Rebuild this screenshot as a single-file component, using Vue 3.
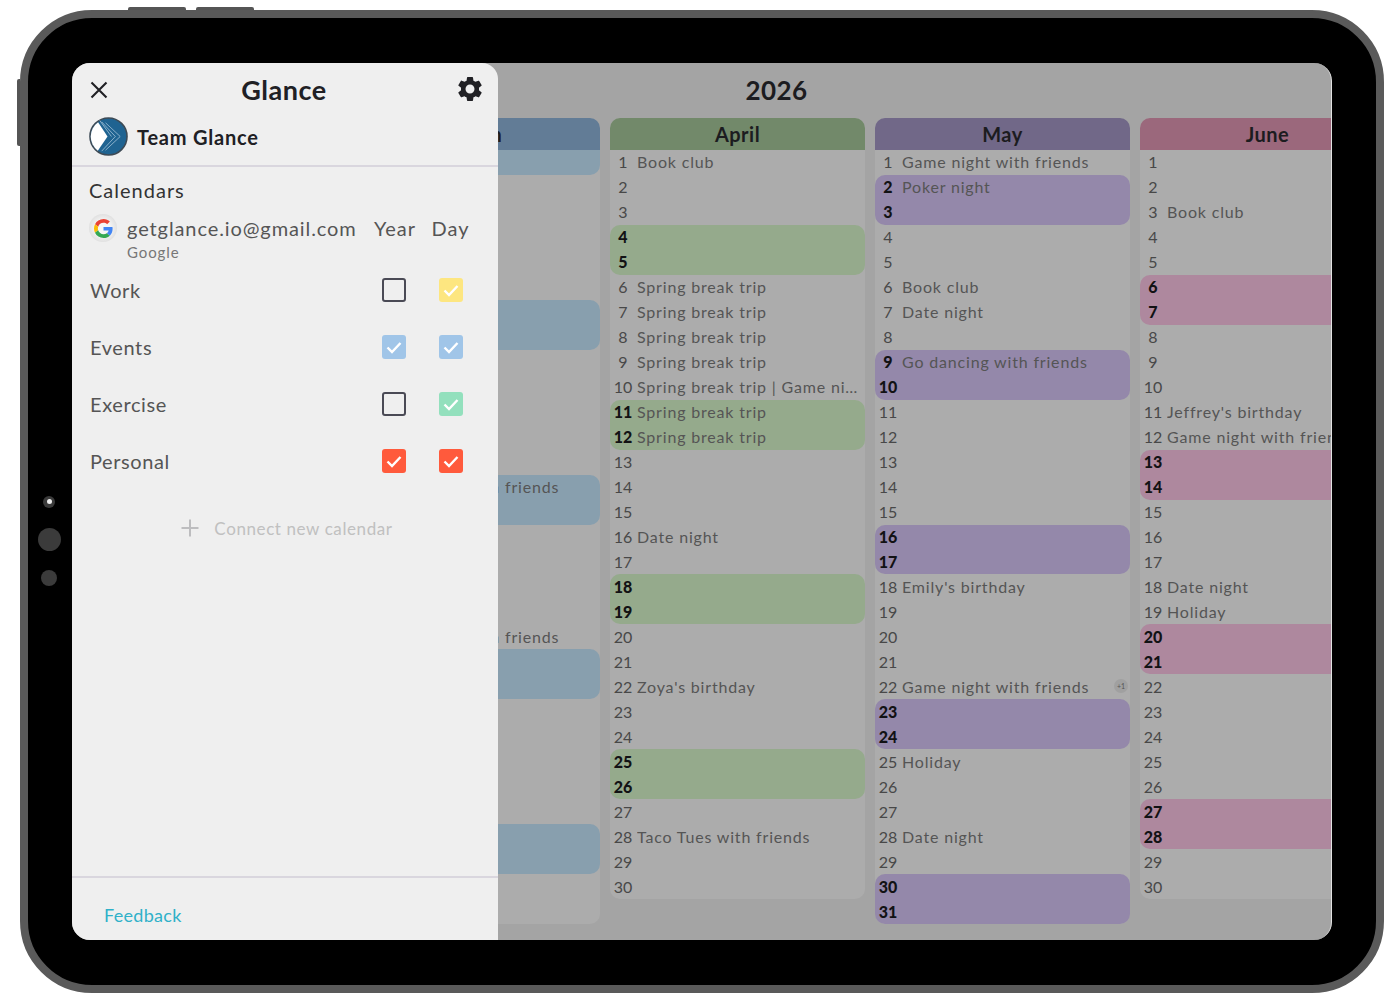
<template>
  <div class="page">
    <div class="device">
      <span class="btn btn-top-a"></span>
      <span class="btn btn-top-b"></span>
      <span class="btn btn-side"></span>
      <span class="lens"><i></i></span>
      <span class="dot dot-big"></span>
      <span class="dot dot-small"></span>

      <div class="screen">
        <div class="year">2026</div>
        <div class="months">
          <section v-for="month in months" :key="month.name" class="month" :class="month.key">
            <h3 class="month-name">{{ month.name }}</h3>
            <div
              v-for="day in month.days"
              :key="day.num"
              class="day"
              :class="{ weekend: day.weekend, sat: day.sat, sun: day.sun }"
            >
              <span class="num">{{ day.num }}</span>
              <span class="text">{{ day.text }}</span>
              <span v-if="day.more" class="more">+{{ day.more }}</span>
            </div>
          </section>
        </div>

        <aside class="panel">
          <header class="panel-head">
            <svg class="close" viewBox="0 0 18 18" width="18" height="18">
              <path d="M1.5 1.5 16.5 16.5M16.5 1.5 1.5 16.5" fill="none" stroke="#202024" stroke-width="2.1" />
            </svg>
            <h1>Glance</h1>
            <svg class="gear" viewBox="0 0 24 24" width="30" height="30">
              <path fill="#202024" d="M19.14 12.94c.04-.3.06-.61.06-.94 0-.32-.02-.64-.07-.94l2.03-1.58c.18-.14.23-.41.12-.61l-1.92-3.32c-.12-.22-.37-.29-.59-.22l-2.39.96c-.5-.38-1.03-.7-1.62-.94l-.36-2.54c-.04-.24-.24-.41-.48-.41h-3.84c-.24 0-.43.17-.47.41l-.36 2.54c-.59.24-1.13.57-1.62.94l-2.39-.96c-.22-.08-.47 0-.59.22L2.74 8.87c-.12.21-.08.47.12.61l2.03 1.58c-.05.3-.09.63-.09.94s.02.64.07.94l-2.03 1.58c-.18.14-.23.41-.12.61l1.92 3.32c.12.22.37.29.59.22l2.39-.96c.5.38 1.03.7 1.62.94l.36 2.54c.05.24.24.41.48.41h3.84c.24 0 .44-.17.47-.41l.36-2.54c.59-.24 1.13-.56 1.62-.94l2.39.96c.22.08.47 0 .59-.22l1.92-3.32c.12-.22.07-.47-.12-.61l-2.01-1.58zM12 15.6c-1.98 0-3.6-1.62-3.6-3.6s1.62-3.6 3.6-3.6 3.6 1.62 3.6 3.6-1.62 3.6-3.6 3.6z" />
            </svg>
          </header>

          <div class="user">
            <svg viewBox="0 0 40 40" width="39" height="39">
              <circle cx="20" cy="20" r="19" fill="#1f6391" stroke="#3d4a55" stroke-width="1.6" />
              <path d="M9.300 5.400 19 20 9 34.500A18 18 0 0 1 9.300 5.400z" fill="#fff" />
              <path d="M13 5 27 20 13 35M17 6 32 20 17 34M11 3.500 23 20" fill="none" stroke="#b9d3e4" stroke-width=".7" />
            </svg>
            <span>Team Glance</span>
          </div>

          <div class="body">
            <h2>Calendars</h2>
            <div class="account">
              <span class="g-badge">
                <svg viewBox="0 0 48 48" width="19" height="19">
                  <path fill="#ea4335" d="M24 9.5c3.5 0 6.700 1.200 9.200 3.600l6.900-6.900C35.900 2.400 30.500 0 24 0 14.600 0 6.500 5.400 2.600 13.200l8 6.200C12.500 13.700 17.800 9.500 24 9.500z" />
                  <path fill="#4285f4" d="M46.980 24.550c0-1.570-.15-3.090-.38-4.550H24v9.020h12.940c-.58 2.960-2.260 5.480-4.780 7.180l7.730 6c4.510-4.180 7.090-10.360 7.090-17.650z" />
                  <path fill="#fbbc05" d="M10.530 28.590c-.48-1.450-.76-2.990-.76-4.590s.27-3.140.76-4.590l-7.980-6.190C.92 16.460 0 20.120 0 24c0 3.880.92 7.540 2.560 10.780l7.970-6.190z" />
                  <path fill="#34a853" d="M24 48c6.480 0 11.930-2.130 15.890-5.810l-7.730-6c-2.150 1.450-4.920 2.300-8.160 2.300-6.260 0-11.570-4.220-13.470-9.910l-7.980 6.190C6.510 42.620 14.620 48 24 48z" />
                </svg>
              </span>
              <div class="account-name">
                <div class="email">getglance.io@gmail.com</div>
                <div class="provider">Google</div>
              </div>
              <span class="col-label year-label">Year</span>
              <span class="col-label day-label">Day</span>
            </div>

            <div v-for="cal in calendars" :key="cal.name" class="cal-row">
              <span class="cal-name">{{ cal.name }}</span>
              <span class="check" :class="{ on: cal.year }" :style="cal.year ? { background: cal.color } : null">
                <svg v-if="cal.year" viewBox="0 0 24 24" width="24" height="24">
                  <path d="M5.500 12.500 10 17 18.500 8" fill="none" stroke="#fff" stroke-width="2.400" />
                </svg>
              </span>
              <span class="check on" :style="{ background: cal.color }">
                <svg viewBox="0 0 24 24" width="24" height="24">
                  <path d="M5.500 12.500 10 17 18.500 8" fill="none" stroke="#fff" stroke-width="2.400" />
                </svg>
              </span>
            </div>

            <div class="connect">
              <svg viewBox="0 0 20 20" width="20" height="20">
                <path d="M10 1.500v17M1.500 10h17" stroke="#bdbdbf" stroke-width="2" fill="none" />
              </svg>
              <span>Connect new calendar</span>
            </div>
          </div>

          <footer class="panel-foot">Feedback</footer>
        </aside>
      </div>
    </div>
  </div>
</template>

<script setup>
const calendars = [
  { name: "Work", year: false, color: "#fde680" },
  { name: "Events", year: true, color: "#a0c5e8" },
  { name: "Exercise", year: false, color: "#93e0bd" },
  { name: "Personal", year: true, color: "#ff5a3c" },
];

const game = "Game night with friends";
const trip = "Spring break trip";

function buildMonth(name, key, index, length, events, more = {}) {
  const days = [];
  for (let num = 1; num <= length; num++) {
    const dow = new Date(2026, index, num).getDay();
    days.push({
      num,
      text: events[num] || "",
      more: more[num],
      weekend: dow === 0 || dow === 6,
      sat: dow === 6,
      sun: dow === 0,
    });
  }
  return { name, key, days };
}

const months = [
  buildMonth("March", "march", 2, 31, { 14: game, 20: game }),
  buildMonth("April", "april", 3, 30, {
    1: "Book club",
    6: trip,
    7: trip,
    8: trip,
    9: trip,
    10: trip + " | Game night with friends",
    11: trip,
    12: trip,
    16: "Date night",
    22: "Zoya's birthday",
    28: "Taco Tues with friends",
  }),
  buildMonth(
    "May",
    "may",
    4,
    31,
    {
      1: game,
      2: "Poker night",
      6: "Book club",
      7: "Date night",
      9: "Go dancing with friends",
      18: "Emily's birthday",
      22: game,
      25: "Holiday",
      28: "Date night",
    },
    { 22: 1 }
  ),
  buildMonth("June", "june", 5, 30, {
    3: "Book club",
    11: "Jeffrey's birthday",
    12: game,
    18: "Date night",
    19: "Holiday",
  }),
];
</script>

<style>
html,
body {
  margin: 0;
  background: #fff;
}
</style>

<style scoped>
.page {
  padding: 10px 16px 0 20px;
  font-family: "Lato", "Noto Sans", sans-serif;
  color: #202024;
}

.device {
  position: relative;
  box-sizing: border-box;
  width: 1364px;
  height: 983px;
  padding: 45px 44px;
  background: #000;
  border: 8px solid #5a5a5a;
  border-radius: 72px;
}

.btn {
  position: absolute;
  background: #555;
}
.btn-top-a,
.btn-top-b {
  top: -11px;
  width: 58px;
  height: 3px;
  border-radius: 2px 2px 0 0;
}
.btn-top-a {
  left: 100px;
}
.btn-top-b {
  left: 168px;
}
.btn-side {
  left: -11px;
  top: 61px;
  width: 3px;
  height: 67px;
  border-radius: 2px 0 0 2px;
}

.lens {
  position: absolute;
  left: 15px;
  top: 478px;
  width: 12px;
  height: 12px;
  border-radius: 50%;
  background: #3a3a3a;
}
.lens i {
  position: absolute;
  left: 4px;
  top: 3px;
  width: 5px;
  height: 5px;
  border-radius: 50%;
  background: #eee;
}
.dot {
  position: absolute;
  border-radius: 50%;
  background: #3b3b3b;
}
.dot-big {
  left: 10px;
  top: 510px;
  width: 23px;
  height: 23px;
}
.dot-small {
  left: 13px;
  top: 552px;
  width: 16px;
  height: 16px;
}

.screen {
  position: relative;
  height: 100%;
  overflow: hidden;
  background: #a4a4a4;
  border-right: 1px solid #e2e2e2;
  border-radius: 18px;
}

.year {
  height: 55px;
  padding-left: 150px;
  text-align: center;
  font-size: 26px;
  font-weight: 700;
  line-height: 55px;
  letter-spacing: 0.4px;
  color: #1c1c20;
}

.months {
  display: flex;
  gap: 10px;
  padding-left: 273px;
  width: 1100px;
}

.month {
  flex: 0 0 255px;
  min-width: 0;
  align-self: flex-start;
  background: #acacac;
  border-radius: 10px;
}

.month-name {
  height: 32px;
  margin: 0;
  text-align: center;
  font-size: 20px;
  font-weight: 700;
  line-height: 33px;
  letter-spacing: 0.5px;
  color: #1c1c20;
  border-radius: 10px 10px 0 0;
}

.day {
  display: flex;
  align-items: center;
  box-sizing: border-box;
  height: 24.97px;
  padding-bottom: 1px;
  font-size: 16px;
  letter-spacing: 0.82px;
  color: #555;
}
.day:last-child {
  border-radius: 0 0 10px 10px;
}
.num {
  flex: 0 0 27px;
  padding-right: 1px;
  box-sizing: border-box;
  text-align: center;
  letter-spacing: 0;
  color: #484848;
}
.text {
  flex: 1;
  min-width: 0;
  overflow: hidden;
  white-space: nowrap;
  text-overflow: ellipsis;
}
.weekend .num {
  font-weight: 900;
  color: #121214;
}
.sat {
  border-radius: 10px 10px 0 0;
}
.sun {
  border-radius: 0 0 10px 10px;
}

.more {
  flex: none;
  width: 14px;
  height: 14px;
  margin-right: 2px;
  text-align: center;
  font-size: 7px;
  line-height: 14px;
  letter-spacing: 0;
  border-radius: 50%;
  background: #a0a0a0;
}

.march .month-name {
  background: #627c96;
}
.april .month-name {
  background: #72896a;
}
.may .month-name {
  background: #716888;
}
.june .month-name {
  background: #9b687c;
}
.march .weekend {
  background: #889fae;
}
.april .weekend {
  background: #95aa8c;
}
.may .weekend {
  background: #9488aa;
}
.june .weekend {
  background: #ae889e;
}

.panel {
  position: absolute;
  top: 0;
  bottom: 0;
  left: 0;
  display: flex;
  flex-direction: column;
  width: 426px;
  background: #efefef;
  border-radius: 0 16px 0 0;
}

.panel-head {
  display: grid;
  grid-template-columns: 1fr auto 1fr;
  align-items: center;
  height: 55px;
  padding: 0 20px 0 18px;
}
.panel-head h1 {
  margin: -2px 0 0;
  font-size: 27px;
  font-weight: 700;
  letter-spacing: 0.5px;
  line-height: 55px;
}
.close {
  margin-top: -1px;
}
.gear {
  justify-self: end;
  margin: -3px -7px 0 0;
}

.user {
  display: flex;
  align-items: center;
  gap: 9px;
  height: 49px;
  padding: 0 0 10px 17px;
  box-sizing: border-box;
  font-size: 20px;
  font-weight: 700;
  letter-spacing: 0.8px;
  border-bottom: 2px solid #d9d6de;
}

.body {
  flex: 1;
  padding: 11px 19px 0 17px;
}
.body h2 {
  margin: 0;
  font-size: 20px;
  font-weight: 400;
  line-height: 24px;
  letter-spacing: 1px;
  color: #333;
}

.account {
  display: grid;
  grid-template-columns: 38px 1fr 57px 57px;
  height: 48px;
  margin-top: 12px;
}
.g-badge {
  display: flex;
  align-items: center;
  justify-content: center;
  width: 28px;
  height: 28px;
  border-radius: 50%;
  background: radial-gradient(circle, #f6f6f6 35%, #cfcfcf 100%);
}
.email {
  font-size: 20px;
  line-height: 28px;
  letter-spacing: 0.9px;
  color: #555;
  white-space: nowrap;
}
.provider {
  margin-top: 1px;
  font-size: 15px;
  line-height: 18px;
  letter-spacing: 0.9px;
  color: #777;
}
.col-label {
  font-size: 20px;
  line-height: 28px;
  letter-spacing: 1px;
  text-align: center;
  color: #555;
}
.year-label {
  padding-left: 3px;
}

.cal-row {
  display: grid;
  grid-template-columns: 1fr 57px 57px;
  align-items: center;
  justify-items: center;
  box-sizing: border-box;
  height: 57px;
  padding-bottom: 2px;
}
.cal-name {
  justify-self: start;
  padding-left: 1px;
  font-size: 20px;
  letter-spacing: 0.6px;
  color: #555;
}
.check {
  box-sizing: border-box;
  width: 24px;
  height: 24px;
  border: 2.5px solid #4a4a55;
  border-radius: 3px;
}
.check.on {
  border: 0;
}
.check svg {
  display: block;
}

.connect {
  display: flex;
  align-items: center;
  justify-content: center;
  gap: 14px;
  height: 38px;
  margin: 19px 0 0 5px;
  font-size: 17px;
  letter-spacing: 0.6px;
  color: #c0c0c0;
}

.panel-foot {
  height: 64px;
  padding: 25px 0 0 32px;
  box-sizing: border-box;
  font-size: 18px;
  line-height: 24px;
  letter-spacing: 0.3px;
  color: #2fb1c9;
  border-top: 2px solid #d9d6de;
}
</style>
